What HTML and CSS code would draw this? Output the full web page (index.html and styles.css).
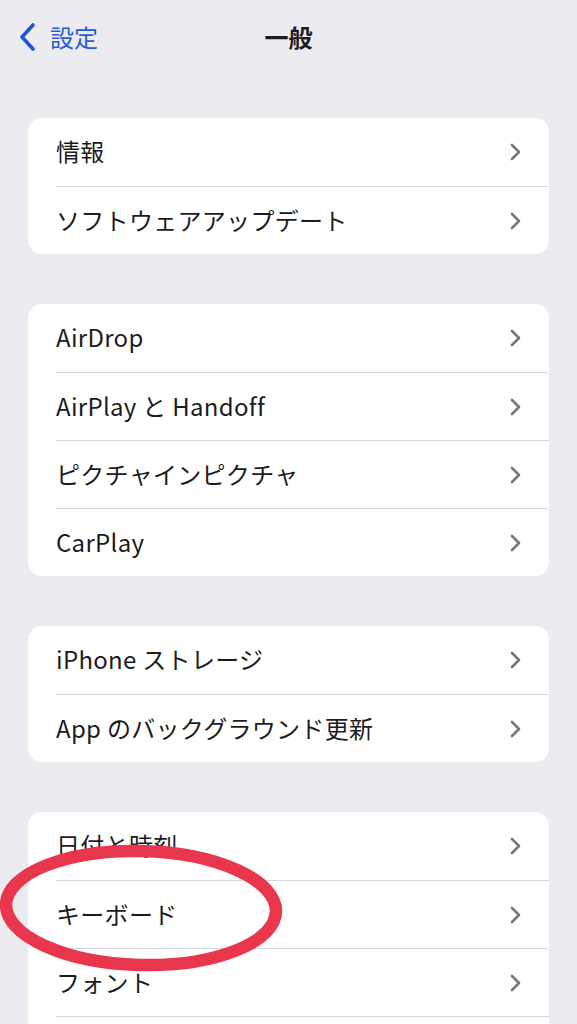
FILE: index.html
```html
<!DOCTYPE html>
<html lang="ja">
<head>
<meta charset="utf-8">
<title>一般</title>
<link rel="stylesheet" href="styles.css">
</head>
<body>
<header class="nav">
  <a class="back">
    <svg class="back-icon" width="18" height="28" viewBox="0 0 18 28"><path d="M15 2 L4 14 L15 26" fill="none" stroke="currentColor" stroke-width="3.6" stroke-linecap="round" stroke-linejoin="round"/></svg>
    <span>設定</span>
  </a>
  <h1 class="title">一般</h1>
  <span></span>
</header>
<main class="content">
  <section class="group">
    <div class="row"><div class="row-inner"><span>情報</span><svg class="chev" width="12" height="20" viewBox="0 0 12 20"><path d="M3 3 L10 10 L3 17" fill="none" stroke="currentColor" stroke-width="2.6" stroke-linecap="round" stroke-linejoin="round"/></svg></div></div>
    <div class="row"><div class="row-inner"><span>ソフトウェアアップデート</span><svg class="chev" width="12" height="20" viewBox="0 0 12 20"><path d="M3 3 L10 10 L3 17" fill="none" stroke="currentColor" stroke-width="2.6" stroke-linecap="round" stroke-linejoin="round"/></svg></div></div>
  </section>
  <section class="group">
    <div class="row"><div class="row-inner"><span>AirDrop</span><svg class="chev" width="12" height="20" viewBox="0 0 12 20"><path d="M3 3 L10 10 L3 17" fill="none" stroke="currentColor" stroke-width="2.6" stroke-linecap="round" stroke-linejoin="round"/></svg></div></div>
    <div class="row"><div class="row-inner"><span>AirPlay と Handoff</span><svg class="chev" width="12" height="20" viewBox="0 0 12 20"><path d="M3 3 L10 10 L3 17" fill="none" stroke="currentColor" stroke-width="2.6" stroke-linecap="round" stroke-linejoin="round"/></svg></div></div>
    <div class="row"><div class="row-inner"><span>ピクチャインピクチャ</span><svg class="chev" width="12" height="20" viewBox="0 0 12 20"><path d="M3 3 L10 10 L3 17" fill="none" stroke="currentColor" stroke-width="2.6" stroke-linecap="round" stroke-linejoin="round"/></svg></div></div>
    <div class="row"><div class="row-inner"><span>CarPlay</span><svg class="chev" width="12" height="20" viewBox="0 0 12 20"><path d="M3 3 L10 10 L3 17" fill="none" stroke="currentColor" stroke-width="2.6" stroke-linecap="round" stroke-linejoin="round"/></svg></div></div>
  </section>
  <section class="group">
    <div class="row"><div class="row-inner"><span>iPhone ストレージ</span><svg class="chev" width="12" height="20" viewBox="0 0 12 20"><path d="M3 3 L10 10 L3 17" fill="none" stroke="currentColor" stroke-width="2.6" stroke-linecap="round" stroke-linejoin="round"/></svg></div></div>
    <div class="row"><div class="row-inner"><span>App のバックグラウンド更新</span><svg class="chev" width="12" height="20" viewBox="0 0 12 20"><path d="M3 3 L10 10 L3 17" fill="none" stroke="currentColor" stroke-width="2.6" stroke-linecap="round" stroke-linejoin="round"/></svg></div></div>
  </section>
  <section class="group">
    <div class="row"><div class="row-inner"><span>日付と時刻</span><svg class="chev" width="12" height="20" viewBox="0 0 12 20"><path d="M3 3 L10 10 L3 17" fill="none" stroke="currentColor" stroke-width="2.6" stroke-linecap="round" stroke-linejoin="round"/></svg></div></div>
    <div class="row"><div class="row-inner"><span>キーボード</span><svg class="chev" width="12" height="20" viewBox="0 0 12 20"><path d="M3 3 L10 10 L3 17" fill="none" stroke="currentColor" stroke-width="2.6" stroke-linecap="round" stroke-linejoin="round"/></svg></div></div>
    <div class="row"><div class="row-inner"><span>フォント</span><svg class="chev" width="12" height="20" viewBox="0 0 12 20"><path d="M3 3 L10 10 L3 17" fill="none" stroke="currentColor" stroke-width="2.6" stroke-linecap="round" stroke-linejoin="round"/></svg></div></div>
    <div class="row"><div class="row-inner row-tail"></div></div>
  </section>
</main>
<svg class="circle-mark" width="284" height="130" viewBox="0 0 284 130"><ellipse cx="141" cy="64" rx="135" ry="57" fill="none" stroke="#e8364c" stroke-width="12.5" transform="rotate(1.5 141 64)"/></svg>
</body>
</html>
```
FILE: styles.css
```css
* { box-sizing: border-box; }
html, body {
  margin: 0;
  padding: 0;
}
body {
  background: #ebebf0;
  font-family: "Noto Sans CJK JP", "Noto Sans", sans-serif;
  color: #1c1c1e;
  position: relative;
  height: 1024px;
  overflow: hidden;
}
.nav {
  height: 76px;
  display: grid;
  grid-template-columns: 1fr auto 1fr;
  align-items: center;
  padding: 0 18px 2px;
}
.back {
  display: flex;
  align-items: center;
  gap: 14px;
  color: #2a5bd3;
  font-size: 24px;
  line-height: 1;
}
.back-icon { color: #1f55d4; }
.title {
  margin: 0;
  font-size: 24px;
  font-weight: 700;
  line-height: 1;
}
.content {
  padding: 42px 28px 0;
  display: flex;
  flex-direction: column;
  gap: 50px;
}
.group {
  background: #ffffff;
  border-radius: 14px;
  overflow: hidden;
}
.row {
  padding-left: 28px;
}
.row-inner {
  height: 68px;
  display: flex;
  align-items: center;
  justify-content: space-between;
  padding: 0 28px 3px 0;
  border-top: 1px solid #d8d8dc;
  font-size: 24px;
  letter-spacing: 0.3px;
}
.row:first-child .row-inner { border-top: none; }
.row-tail { height: 20px; }
.chev { color: #77777c; margin-top: 3px; }
.circle-mark {
  position: absolute;
  left: 0;
  top: 844px;
}
```
